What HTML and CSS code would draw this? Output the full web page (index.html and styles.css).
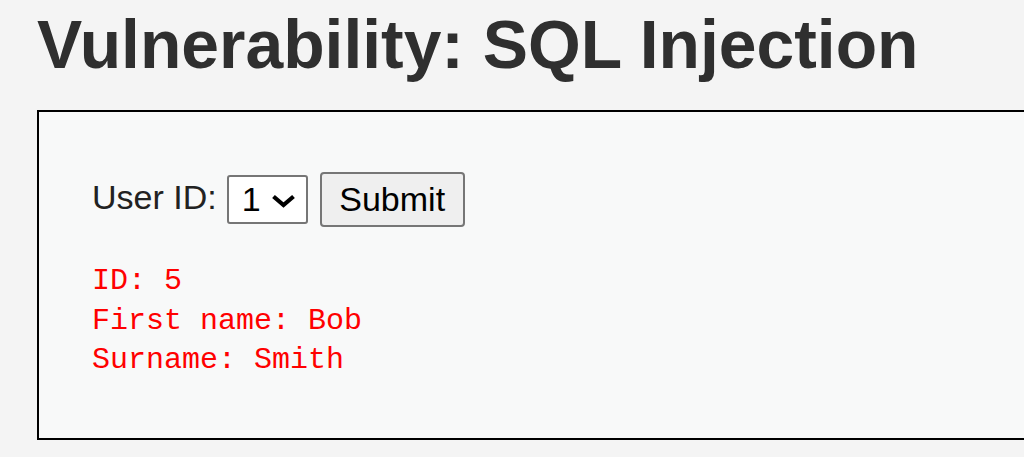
FILE: index.html
```html
<!DOCTYPE html>
<html>
<head>
<meta charset="utf-8">
<link rel="stylesheet" href="styles.css">
</head>
<body>
<div class="page">
  <h1 class="title">Vulnerability: SQL Injection</h1>
  <div class="vulnerable-code">
    <form class="form-row">
      <span class="label">User ID:</span>
      <span class="select-box"><span class="select-value">1</span><svg class="chev" width="25" height="14" viewBox="0 0 25 14"><path d="M2.5 2.5 L12.5 11 L22.5 2.5" fill="none" stroke="#000" stroke-width="4.2"/></svg></span>
      <button type="button" class="submit">Submit</button>
    </form>
    <pre class="result">ID: 5
First name: Bob
Surname: Smith</pre>
  </div>
</div>
</body>
</html>
```

FILE: styles.css
```css
html, body {
  margin: 0;
  padding: 0;
  background: #f4f4f4;
  overflow: hidden;
}
.page {
  padding: 5px 0 0 37px;
  font-family: "Liberation Sans", Arial, sans-serif;
  color: #2f2f2f;
}
.title {
  margin: 0;
  font-size: 67.8px;
  line-height: 80px;
  font-weight: bold;
  white-space: nowrap;
}
.vulnerable-code {
  margin-top: 25px;
  height: 266px;
  border: 2px solid #000;
  border-right: none;
  background: #f8f9f9;
  padding: 60px 0 0 53px;
  box-sizing: content-box;
}
.form-row {
  display: flex;
  align-items: center;
  height: 55px;
  margin: 0;
}
.label {
  font-size: 34px;
  color: #222;
  margin-right: 10px;
  position: relative;
  top: -2px;
}
.select-box {
  display: flex;
  align-items: center;
  box-sizing: border-box;
  width: 81px;
  height: 49px;
  border: 2px solid #767676;
  border-radius: 3px;
  background: #fff;
  padding-left: 13px;
  margin-right: 12px;
}
.select-value {
  font-size: 34px;
  color: #000;
  width: 29px;
}
.chev {
  display: block;
  margin-top: 2px;
}
.submit {
  box-sizing: border-box;
  width: 145px;
  height: 55px;
  border: 2px solid #767676;
  border-radius: 4px;
  background: #efefef;
  font-family: "Liberation Sans", Arial, sans-serif;
  font-size: 34px;
  color: #000;
  padding: 0;
  margin: 0;
}
.result {
  margin: 35px 0 0 0;
  color: #ff0000;
  font-family: "Liberation Mono", "Courier New", monospace;
  font-size: 30px;
  line-height: 39.5px;
}
```
